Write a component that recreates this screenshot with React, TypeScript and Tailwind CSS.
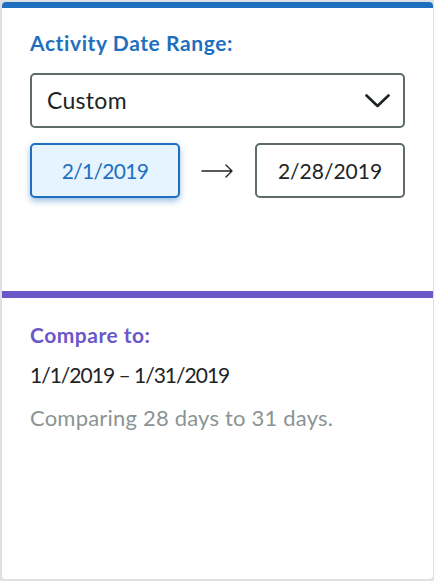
export default function App() {
  return (
    <div className="w-[434px] h-[581px] bg-[#dde1e1] pl-[2px] pt-[2px] pr-[1px] pb-[2px] font-['Lato',sans-serif]">
      <div className="h-full bg-white rounded-[4px] border-t-[6px] border-[#1f6fbf] flex flex-col">
        {/* Date range */}
        <div className="h-[283px] px-[28px] pt-[23px]">
          <h2 className="text-[21px] leading-[24px] font-bold tracking-[0.6px] text-[#1f6fbf]">Activity Date Range:</h2>

          <div className="mt-[18px] h-[55px] border-2 border-[#5f6a6a] rounded-[5px] flex items-center justify-between pl-[15px] pr-[13px]">
            <span className="text-[23px] tracking-[0.3px] text-[#1d2426]">Custom</span>
            <svg width="25" height="14" viewBox="0 0 25 14" fill="none" className="text-[#1d2426]">
              <path d="M1.5 1.5 L12.5 12 L23.5 1.5" stroke="currentColor" strokeWidth="2.6" strokeLinecap="round" strokeLinejoin="round" />
            </svg>
          </div>

          <div className="mt-[15px] flex items-center">
            <div className="w-[150px] h-[55px] rounded-[5px] border-2 border-[#1f6fbf] bg-[#e5f4fe] shadow-[0_3px_6px_rgba(31,111,191,0.45)] flex items-center justify-center text-[21px] tracking-[-0.7px] text-[#1f6fbf]">
              2/1/2019
            </div>
            <div className="flex-1 flex justify-center">
              <svg width="33" height="16" viewBox="0 0 33 16" fill="none" className="text-[#1d2426]">
                <path d="M1 8 H31 M25 2 L31 8 L25 14" stroke="currentColor" strokeWidth="1.4" strokeLinecap="round" strokeLinejoin="round" />
              </svg>
            </div>
            <div className="w-[150px] h-[55px] rounded-[5px] border-2 border-[#5f6a6a] flex items-center justify-center text-[21px] text-[#1d2426]">
              2/28/2019
            </div>
          </div>
        </div>

        {/* Comparison */}
        <div className="flex-1 border-t-[7px] border-[#6a58c9] px-[28px] pt-[25px]">
          <h2 className="text-[21px] leading-[24px] font-bold tracking-[0.5px] text-[#6a58c9]">Compare to:</h2>
          <p className="mt-[15px] text-[21px] leading-[26px] tracking-[-1px] text-[#1d2426]">1/1/2019 – 1/31/2019</p>
          <p className="mt-[16px] text-[22px] leading-[28px] tracking-[0.2px] text-[#8a9494]">Comparing 28 days to 31 days.</p>
        </div>
      </div>
    </div>
  )
}
